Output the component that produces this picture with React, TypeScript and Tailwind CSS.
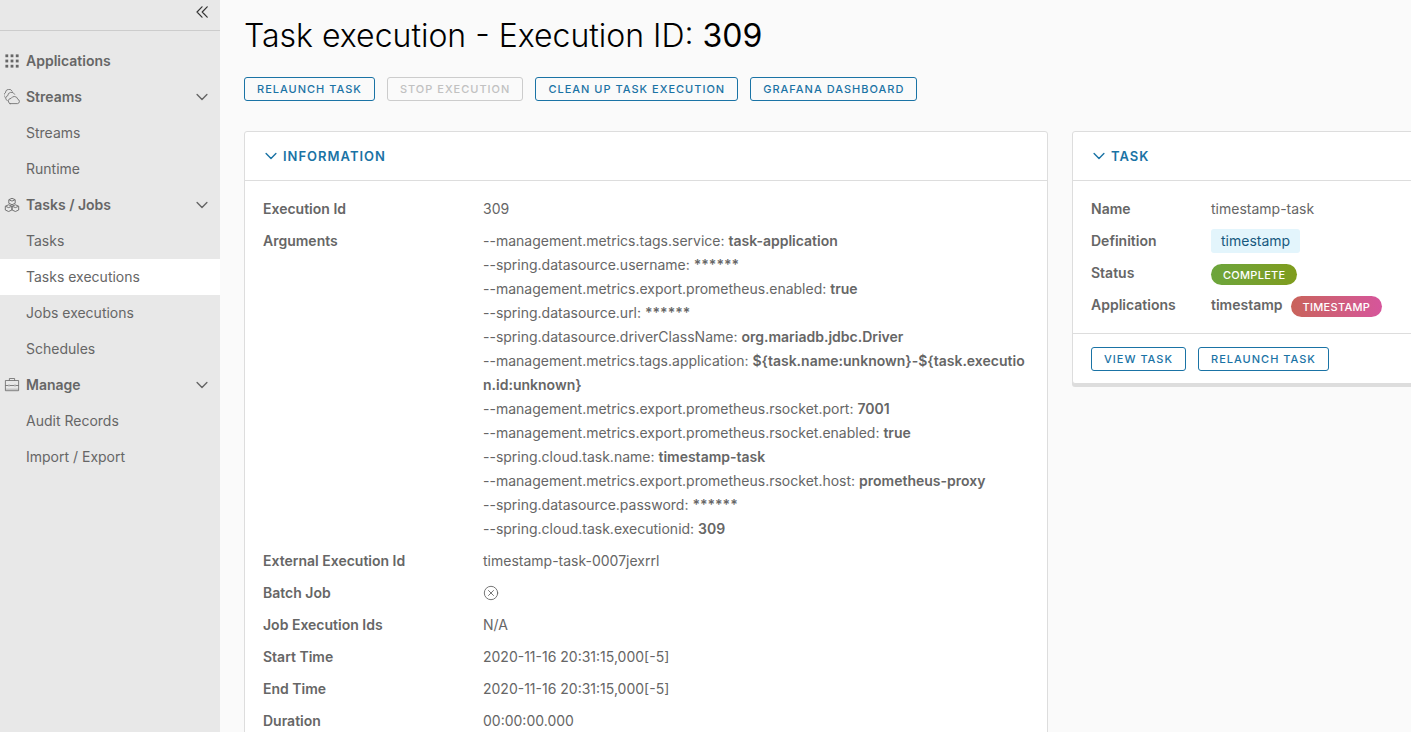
import type { ReactNode } from "react";

function Chevron({ className = "" }: { className?: string }) {
  return (
    <svg viewBox="0 0 16 16" className={`size-4 shrink-0 ${className}`} fill="none" stroke="currentColor" strokeWidth="1.4" aria-hidden="true">
      <path d="M3.100 5.600 8 10.600 12.900 5.600" strokeLinecap="round" strokeLinejoin="round" />
    </svg>
  );
}

function CollapseIcon() {
  return (
    <svg viewBox="0 0 16 16" className="size-4" fill="none" stroke="currentColor" strokeWidth="1.2" aria-hidden="true">
      <path d="M8 2.8 3 8l5 5.2M13.2 2.8 8.2 8l5 5.2" strokeLinecap="round" strokeLinejoin="round" />
    </svg>
  );
}

function GridIcon() {
  return (
    <svg viewBox="0 0 16 16" className="size-4" fill="currentColor" aria-hidden="true">
      {[1.4, 6.6, 11.8].map((y) => [1.4, 6.6, 11.8].map((x) => <rect key={`${x}-${y}`} x={x} y={y} width="2.800" height="2.800" />))}
    </svg>
  );
}

function CloudsIcon() {
  return (
    <svg viewBox="0 0 16 16" className="size-4" fill="none" stroke="currentColor" strokeWidth="0.8" strokeLinecap="round" strokeLinejoin="round" aria-hidden="true">
      <path d="M6 14.600h7.500a2.200 2.200 0 0 0 .3-4.300 3.600 3.600 0 0 0-6.700-.9A2.700 2.700 0 0 0 6 14.600Z" />
      <path d="M3.300 11.600A2.500 2.500 0 0 1 3.700 6.800 3.700 3.700 0 0 1 10.700 5.300" />
      <path d="M.8 8.300A2.500 2.500 0 0 1 1.400 3.900 3.600 3.600 0 0 1 8.200 2.200" />
    </svg>
  );
}

function BlocksIcon() {
  return (
    <svg viewBox="0 0 16 16" className="size-4" fill="none" stroke="currentColor" strokeWidth="0.9" strokeLinejoin="round" aria-hidden="true">
      <path d="M8 1.300 11.200 2.700V6.300L8 7.700 4.800 6.300V2.700ZM5.200 2.900 8 4.100 10.800 2.900" />
      <path d="M4.600 7.800 7.900 9.200V13L4.600 14.500 1.300 13V9.200ZM1.700 9.400 4.600 10.600 7.500 9.400" />
      <path d="M11.400 7.800 14.700 9.200V13L11.400 14.500 8.100 13V9.200ZM8.500 9.400 11.400 10.600 14.300 9.400" />
    </svg>
  );
}

function BriefcaseIcon() {
  return (
    <svg viewBox="0 0 16 16" className="size-4" fill="none" stroke="currentColor" strokeWidth="0.8" strokeLinejoin="round" aria-hidden="true">
      <path d="M1.400 3.500h13.200v10.200H1.400ZM5.400 3.500v-2h5.200v2M1.400 8.500h2.800M5.800 8.500h4.400M11.800 8.500h2.800M5 7.600v1.800M11 7.600v1.800" />
      <path d="M1.400 12.200h13.200" strokeWidth="0.4" />
    </svg>
  );
}

function CrossCircleIcon() {
  return (
    <svg viewBox="0 0 16 16" className="size-4" fill="none" stroke="currentColor" strokeWidth="0.9" strokeLinecap="round" role="img" aria-label="No">
      <circle cx="8" cy="8" r="6.700" />
      <path d="m5.500 5.500 5 5M10.500 5.500l-5 5" />
    </svg>
  );
}

type Group = { label: string; icon: ReactNode; items: string[] };

const groups: Group[] = [
  { label: "Streams", icon: <CloudsIcon />, items: ["Streams", "Runtime"] },
  { label: "Tasks / Jobs", icon: <BlocksIcon />, items: ["Tasks", "Tasks executions", "Jobs executions", "Schedules"] },
  { label: "Manage", icon: <BriefcaseIcon />, items: ["Audit Records", "Import / Export"] },
];

function Sidebar() {
  return (
    <aside className="w-[220px] shrink-0 bg-[#e8e8e8]">
      <div className="flex h-[31px] items-start justify-end border-b border-[#ccc] px-2.5 pt-1 text-[#333]">
        <button type="button" aria-label="Collapse menu">
          <CollapseIcon />
        </button>
      </div>
      <nav className="pt-3">
        <a href="#applications" className="flex h-9 items-center gap-1.5 px-1 font-semibold">
          <GridIcon />
          Applications
        </a>
        {groups.map((group) => (
          <div key={group.label}>
            <button type="button" className="flex h-9 w-full items-center gap-1.5 pr-2.5 pl-1 font-semibold">
              {group.icon}
              {group.label}
              <Chevron className="ml-auto" />
            </button>
            {group.items.map((item) => (
              <a
                key={item}
                href="#nav"
                className={`flex h-9 items-center pl-[26px] ${item === "Tasks executions" ? "bg-white" : ""}`}
              >
                {item}
              </a>
            ))}
          </div>
        ))}
      </nav>
    </aside>
  );
}

function OutlineButton({ children, disabled = false }: { children: ReactNode; disabled?: boolean }) {
  return (
    <button
      type="button"
      disabled={disabled}
      className="h-6 rounded-[3px] border border-[#1a73a5] px-3 text-[11px] leading-[22px] font-medium tracking-[1px] whitespace-nowrap text-[#1a73a5] uppercase disabled:border-[#ccc] disabled:text-[#c1c1c1]"
    >
      {children}
    </button>
  );
}

function CardHeader({ title }: { title: string }) {
  return (
    <h2 className="border-b border-[#ddd]">
      <button type="button" className="flex h-12 items-center gap-1 px-[18px] text-[13px] font-semibold tracking-[1px] text-[#1a73a5] uppercase">
        <Chevron />
        {title}
      </button>
    </h2>
  );
}

function Row({ label, wide = false, children }: { label: string; wide?: boolean; children: ReactNode }) {
  return (
    <div className="flex py-1">
      <dt className={`shrink-0 font-semibold ${wide ? "w-[220px]" : "w-[120px]"}`}>{label}</dt>
      <dd className="min-w-0 flex-1">{children}</dd>
    </div>
  );
}

const args: [string, string][] = [
  ["--management.metrics.tags.service", "task-application"],
  ["--spring.datasource.username", "******"],
  ["--management.metrics.export.prometheus.enabled", "true"],
  ["--spring.datasource.url", "******"],
  ["--spring.datasource.driverClassName", "org.mariadb.jdbc.Driver"],
  ["--management.metrics.tags.application", "${task.name:unknown}-${task.execution.id:unknown}"],
  ["--management.metrics.export.prometheus.rsocket.port", "7001"],
  ["--management.metrics.export.prometheus.rsocket.enabled", "true"],
  ["--spring.cloud.task.name", "timestamp-task"],
  ["--management.metrics.export.prometheus.rsocket.host", "prometheus-proxy"],
  ["--spring.datasource.password", "******"],
  ["--spring.cloud.task.executionid", "309"],
];

export default function App() {
  return (
    <div className="flex h-screen overflow-hidden bg-[#fafafa] font-['Inter',sans-serif] text-sm leading-6 text-[#666]">
      <Sidebar />
      <main className="min-w-0 flex-1 overflow-auto px-6 pb-6 [scrollbar-width:none]">
        <h1 className="pt-4 text-[32px] leading-10 font-light text-black">
          Task execution - Execution ID: <span className="font-normal">309</span>
        </h1>
        <div className="mt-[21px] flex gap-3">
          <OutlineButton>Relaunch task</OutlineButton>
          <OutlineButton disabled>Stop execution</OutlineButton>
          <OutlineButton>Clean up task execution</OutlineButton>
          <OutlineButton>Grafana dashboard</OutlineButton>
        </div>
        <div className="mt-[30px] grid min-w-[1218px] grid-cols-12 items-start gap-6">
          <section className="col-span-8 rounded-[3px] border border-[#ddd] bg-white shadow-[0_3px_0_#ddd]">
            <CardHeader title="Information" />
            <dl className="px-[18px] py-3">
              <Row wide label="Execution Id">309</Row>
              <Row wide label="Arguments">
                {args.map(([key, value]) => (
                  <div key={key} className="break-all">
                    {key}: <strong className="font-semibold">{value}</strong>
                  </div>
                ))}
              </Row>
              <Row wide label="External Execution Id">timestamp-task-0007jexrrl</Row>
              <Row wide label="Batch Job">
                <span className="flex h-6 items-center"><CrossCircleIcon /></span>
              </Row>
              <Row wide label="Job Execution Ids">N/A</Row>
              <Row wide label="Start Time">2020-11-16 20:31:15,000[-5]</Row>
              <Row wide label="End Time">2020-11-16 20:31:15,000[-5]</Row>
              <Row wide label="Duration">00:00:00.000</Row>
            </dl>
          </section>
          <section className="col-span-4 rounded-[3px] border border-[#ddd] bg-white shadow-[0_3px_0_#ddd]">
            <CardHeader title="Task" />
            <dl className="px-[18px] py-3">
              <Row label="Name">timestamp-task</Row>
              <Row label="Definition">
                <span className="inline-block rounded-[3px] bg-[#e3f5fc] px-2.5 text-[#17597f]">timestamp</span>
              </Row>
              <Row label="Status">
                <span className="flex h-6 items-end">
                  <span className="flex h-[21px] items-center rounded-full bg-linear-to-r from-[#6ca53c] to-[#7f9c1c] px-3 text-[11px] font-medium tracking-wide text-white">COMPLETE</span>
                </span>
              </Row>
              <Row label="Applications">
                <span className="flex h-6 items-end gap-2">
                  <span className="font-semibold">timestamp</span>
                  <span className="flex h-[21px] items-center rounded-full bg-linear-to-r from-[#c9635a] to-[#d6559b] px-3 text-[11px] font-medium tracking-wide text-white">TIMESTAMP</span>
                </span>
              </Row>
            </dl>
            <div className="flex gap-3 border-t border-[#ddd] px-[18px] pt-[13px] pb-3">
              <OutlineButton>View task</OutlineButton>
              <OutlineButton>Relaunch task</OutlineButton>
            </div>
          </section>
        </div>
      </main>
    </div>
  );
}
